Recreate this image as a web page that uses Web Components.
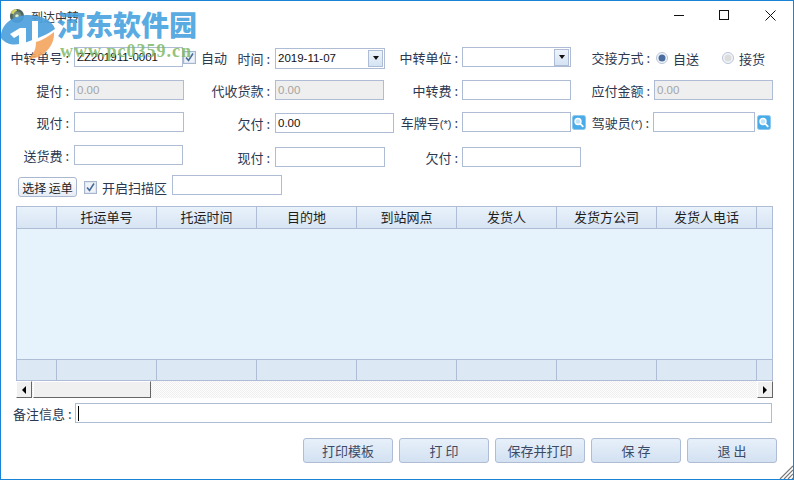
<!DOCTYPE html>
<html lang="zh">
<head>
<meta charset="utf-8">
<title>到达中转</title>
<style>
  html, body { margin: 0; padding: 0; background: #fff; }
  body { font: 13px "Noto Sans CJK SC", "Liberation Sans", sans-serif; color: #2c3850; }
</style>
</head>
<body>
<app-window title-text="到达中转">
  <form-row top="16">
    <form-field label="中转单号 :">
      <text-box width="109" value="ZZ201911-0001"></text-box>
      <check-box checked label="自动"></check-box>
    </form-field>
    <form-field label="时间 :" shift="1"><combo-box width="110" height="21" value="2019-11-07"></combo-box></form-field>
    <form-field label="中转单位 :"><combo-box width="109" height="20"></combo-box></form-field>
    <form-field label="交接方式 :">
      <radio-button checked label="自送" style="margin-left:2px"></radio-button>
      <radio-button label="接货" style="margin-left:23px"></radio-button>
    </form-field>
  </form-row>
  <form-row top="13">
    <form-field label="提付 :"><text-box width="110" value="0.00" disabled></text-box></form-field>
    <form-field label="代收货款 :"><text-box width="109" value="0.00" disabled></text-box></form-field>
    <form-field label="中转费 :"><text-box width="109"></text-box></form-field>
    <form-field label="应付金额 :"><text-box width="119" value="0.00" disabled></text-box></form-field>
  </form-row>
  <form-row top="12">
    <form-field label="现付 :"><text-box width="110"></text-box></form-field>
    <form-field label="欠付 :" shift="1"><text-box width="119" value="0.00"></text-box></form-field>
    <form-field label="车牌号<small>(*)</small> :"><text-box width="109"></text-box><search-button></search-button></form-field>
    <form-field label="驾驶员<small>(*)</small> :" inset="1"><text-box width="102"></text-box><search-button style="margin-left:2px"></search-button></form-field>
  </form-row>
  <form-row top="13">
    <form-field label="送货费 :"><text-box width="109"></text-box></form-field>
    <form-field label="现付 :" shift="2"><text-box width="110"></text-box></form-field>
    <form-field label="欠付 :" shift="2"><text-box width="119"></text-box></form-field>
  </form-row>
  <scan-bar></scan-bar>
  <data-grid columns="托运单号,托运时间,目的地,到站网点,发货人,发货方公司,发货人电话"></data-grid>
  <note-bar></note-bar>
  <action-bar>
    <push-button>打印模板</push-button>
    <push-button>打 印</push-button>
    <push-button>保存并打印</push-button>
    <push-button>保 存</push-button>
    <push-button>退 出</push-button>
  </action-bar>
</app-window>
<site-watermark></site-watermark>

<script>
"use strict";
// every element just sets its markup in an open shadow root
class Base extends HTMLElement {
  connectedCallback() {
    if (this.shadowRoot) return;
    this.attachShadow({ mode: "open" }).innerHTML = this.markup();
  }
  attr(name, fallback = "") {
    return this.hasAttribute(name) ? this.getAttribute(name) : fallback;
  }
}

class AppWindow extends Base {
  markup() {
    return `<style>
      :host { display: block; box-sizing: border-box; width: 794px; height: 480px; border: 1px solid #1a83d6; background: #fff; position: relative; overflow: hidden; }
      .title { display: flex; align-items: center; height: 30px; padding-left: 8px; font-size: 12px; color: #333; }
      .ico { width: 16px; height: 16px; margin-right: 6px; }
      .btns { margin-left: auto; display: flex; }
      .btns svg { width: 46px; height: 30px; display: block; }
      .grip { position: absolute; right: 0; bottom: 0; width: 14px; height: 14px; }
    </style>
    <div class="title">
      <svg class="ico" viewBox="0 0 18 18"><circle cx="9" cy="9" r="8" fill="#4c6660"/><circle cx="9" cy="9" r="5" fill="#6f8a80"/><circle cx="9" cy="9" r="2" fill="#dff0d0"/><path d="M2 6a8 8 0 0 1 6-5l1 2a6 6 0 0 0-4 4z" fill="#d9d65c"/></svg>
      <span>${this.attr("title-text")}</span>
      <div class="btns">
        <svg viewBox="0 0 46 30"><path d="M19 14.500h10" stroke="#111" fill="none"/></svg>
        <svg viewBox="0 0 46 30"><rect x="18.500" y="9.500" width="9" height="9" stroke="#111" fill="none"/></svg>
        <svg viewBox="0 0 46 30"><path d="M18.500 9.500l10 10M28.500 9.500l-10 10" stroke="#111" fill="none"/></svg>
      </div>
    </div>
    <slot></slot>
    <svg class="grip" viewBox="0 0 14 14"><path d="M14 1L1 14M14 5L5 14M14 9L9 14M14 13L13 14" stroke="#777" stroke-width="1.200" fill="none"/></svg>`;
  }
}

class FormRow extends Base {
  markup() {
    return `<style>
      :host { display: grid; grid-template-columns: 186px 209px 192px 1fr; height: 20px; margin-top: ${this.attr("top", 12)}px; white-space: nowrap; }
    </style><slot></slot>`;
  }
}

// columns of the form have different label widths, the track index decides it
class FormField extends Base {
  markup() {
    const index = [...this.parentElement.children].indexOf(this);
    const widths = [73, 88, 66, 66];
    const pads = [5, 5, 4, 4];
    const w = widths[index] - Number(this.attr("inset", 0));
    return `<style>
      :host { display: flex; align-items: center; height: 20px; margin-top: ${this.attr("shift", 0)}px; min-width: 0; }
      label { flex: none; width: ${w}px; box-sizing: border-box; padding-right: ${pads[index]}px; text-align: right; }
      small { font: 11px "Liberation Sans", sans-serif; }
    </style><label>${this.attr("label")}</label><slot></slot>`;
  }
}

class TextBox extends Base {
  markup() {
    const off = this.hasAttribute("disabled");
    return `<style>
      :host { display: inline-block; flex: none; box-sizing: border-box; width: ${this.attr("width", 110)}px; height: 20px; border: 1px solid #aebcd6; background: ${off ? "#efefef" : "#fff"}; color: ${off ? "#a4a4a4" : "#111"}; font: 11.500px/18px "Liberation Sans", sans-serif; padding-left: 2px; overflow: hidden; }
    </style>${this.attr("value")}`;
  }
}

class ComboBox extends Base {
  markup() {
    const h = this.attr("height", 20);
    return `<style>
      :host { display: inline-flex; flex: none; box-sizing: border-box; width: ${this.attr("width", 110)}px; height: ${h}px; border: 1px solid #aebcd6; background: #fff; color: #111; font: 11.500px "Liberation Sans", sans-serif; align-items: center; padding-left: 2px; }
      span { flex: 1; }
      b { box-sizing: border-box; width: 15px; height: 17px; margin-right: 1px; border: 1px solid #aebcd6; background: linear-gradient(#eef4fb, #d5e3f3); display: flex; align-items: center; justify-content: center; }
      i { border: 3px solid transparent; border-top: 4px solid #111; border-bottom: 0; }
    </style><span>${this.attr("value")}</span><b><i></i></b>`;
  }
}

class CheckBox extends Base {
  markup() {
    return `<style>
      :host { display: inline-flex; align-items: center; flex: none; gap: 5px; }
      svg { width: 13px; height: 13px; display: block; }
    </style>
    <svg viewBox="0 0 13 13"><rect x=".5" y=".5" width="12" height="12" fill="#dde6f1" stroke="#a7b5cd"/><rect x="2" y="2" width="9" height="9" fill="#eef3f9"/><path d="M3 6.500l2.500 3L10 2.500" stroke="#4a6a98" stroke-width="1.600" fill="none"/></svg>
    <span>${this.attr("label")}</span>`;
  }
}

class RadioButton extends Base {
  markup() {
    const dot = this.hasAttribute("checked") ? "#4b6c9f" : "#dcdcdc";
    return `<style>
      :host { display: inline-flex; align-items: center; flex: none; gap: 5px; margin-top: 2px; }
      svg { width: 12px; height: 12px; display: block; }
    </style>
    <svg viewBox="0 0 12 12"><circle cx="6" cy="6" r="5.500" fill="#f2f5f9" stroke="#b7c3d6"/><circle cx="6" cy="6" r="3.500" fill="${dot}"/></svg>
    <span>${this.attr("label")}</span>`;
  }
}

class SearchButton extends Base {
  markup() {
    return `<style>
      :host { display: inline-block; flex: none; width: 14px; height: 15px; margin-left: 1px; }
      svg { display: block; }
    </style>
    <svg width="14" height="15" viewBox="0 0 14 15"><rect x=".5" y=".5" width="13" height="14" rx="2" fill="#49ace9" stroke="#8cc8ee"/><circle cx="6" cy="6.500" r="3" fill="#bfe3fa" stroke="#fff" stroke-width="1.400"/><path d="M8.300 8.800l3 3" stroke="#fff" stroke-width="1.800"/></svg>`;
  }
}

class PushButton extends Base {
  markup() {
    return `<style>
      :host { display: flex; align-items: center; justify-content: center; box-sizing: border-box; width: 90px; height: 25px; border: 1px solid #aebcd6; border-radius: 3px; background: linear-gradient(#e7f0fa, #d3e1f1); color: #3b4a66; }
    </style><slot></slot>`;
  }
}

class ScanBar extends Base {
  markup() {
    return `<style>
      :host { display: flex; align-items: flex-end; height: 22px; margin: 10px 0 0 17px; }
      button { box-sizing: border-box; width: 59px; height: 20px; padding: 0; border: 1px solid #a9b7d1; border-radius: 3px; background: linear-gradient(#fff, #e6ecf5); color: #222; font: 12px "Noto Sans CJK SC", sans-serif; }
      check-box { margin-left: 7px; }
      text-box { margin-left: 5px; align-self: flex-start; }
    </style>
    <button>选择 运单</button>
    <check-box checked label="开启扫描区"></check-box>
    <text-box width="110"></text-box>`;
  }
}

class DataGrid extends Base {
  markup() {
    const cols = this.attr("columns").split(",");
    const cells = (names) => `<div class="c first"></div>` + names.map((n) => `<div class="c">${n}</div>`).join("") + `<div class="c last"></div>`;
    return `<style>
      :host { display: block; box-sizing: border-box; width: 757px; margin: 9px 0 0 15px; color: #1d1d1d; }
      .box { border: 1px solid #aebcd6; border-bottom: 0; background: #e6f3fd; }
      .row { display: grid; grid-template-columns: 40px repeat(7, 100px) 1fr; }
      .head { height: 21px; background: linear-gradient(#e9f2fb, #d7e4f3); border-bottom: 1px solid #aebcd6; }
      .body { height: 130px; }
      .foot { height: 20px; background: #dde8f5; border-top: 1px solid #aebcd6; border-bottom: 1px solid #aebcd6; }
      .c { border-right: 1px solid #aebcd6; text-align: center; line-height: 20px; white-space: nowrap; overflow: hidden; }
      .last { border-right: 0; }
    </style>
    <div class="box">
      <div class="row head">${cells(cols)}</div>
      <div class="body"></div>
      <div class="row foot">${cells(cols.map(() => ""))}</div>
    </div>
    <h-scrollbar></h-scrollbar>`;
  }
}

class HScrollbar extends Base {
  markup() {
    const raised = "box-sizing:border-box;background:#f0f0f0;border:1px solid;border-color:#fff #666 #666 #fff;";
    return `<style>
      :host { display: flex; height: 17px; background: repeating-conic-gradient(#efefef 0 25%, #fdfdfd 0 50%) 0 0 / 2px 2px; }
      .arrow { ${raised} width: 16px; display: flex; align-items: center; justify-content: center; }
      .thumb { ${raised} width: 118px; margin-left: 1px; }
      .left { border-top: 4px solid transparent; border-bottom: 4px solid transparent; border-right: 4px solid #000; }
      .right { border-top: 4px solid transparent; border-bottom: 4px solid transparent; border-left: 4px solid #000; }
    </style>
    <div class="arrow"><i class="left"></i></div>
    <div class="thumb"></div>
    <div style="flex:1"></div>
    <div class="arrow"><i class="right"></i></div>`;
  }
}

class NoteBar extends Base {
  markup() {
    return `<style>
      :host { display: flex; align-items: center; height: 20px; margin: 5px 0 0 12px; }
      .input { box-sizing: border-box; width: 697px; height: 20px; margin-left: 3px; border: 1px solid #aebcd6; display: flex; align-items: center; padding-left: 2px; }
      .caret { width: 1px; height: 15px; background: #000; }
    </style>
    <span>备注信息 :</span>
    <div class="input"><div class="caret"></div></div>`;
  }
}

class ActionBar extends Base {
  markup() {
    return `<style>
      :host { display: flex; gap: 6px; margin: 15px 0 0 302px; }
    </style><slot></slot>`;
  }
}

// the download site's stamp, lies over the title bar and first row
class SiteWatermark extends Base {
  markup() {
    return `<style>
      :host { position: absolute; left: 0; top: 0; width: 200px; height: 66px; pointer-events: none; }
      svg { position: absolute; left: 0; top: 10px; }
      .name { position: absolute; left: 57px; top: 6px; font: 900 28px/36px "Noto Sans CJK SC", sans-serif; color: rgba(66, 160, 222, .9); white-space: nowrap; }
      .url { position: absolute; left: 60px; top: 41px; font: bold 18px/20px "Liberation Serif", serif; letter-spacing: 1px; color: rgba(128, 184, 100, .85); white-space: nowrap; }
    </style>
    <svg width="60" height="50" viewBox="0 0 60 50">
      <path d="M1 28C0 14 14 5 28 5c13 0 25 6 27 14-8 6-17 9-28 13C18 35 8 37 1 28z" fill="#4d9fdc" fill-opacity=".92"/>
      <path d="M10 24l10-6h6v17h-7V25l-5 3z" fill="#fff"/>
      <path d="M32 11h6v19h-6z" fill="#fff"/>
      <path d="M54 22c1 14-11 27-26 27 6-5 8-10 8-17 7-2 13-6 18-10z" fill="#f3a65f" fill-opacity=".92"/>
    </svg>
    <div class="name">河东软件园</div>
    <div class="url">www.pc0359.cn</div>`;
  }
}

customElements.define("app-window", AppWindow);
customElements.define("form-row", FormRow);
customElements.define("form-field", FormField);
customElements.define("text-box", TextBox);
customElements.define("combo-box", ComboBox);
customElements.define("check-box", CheckBox);
customElements.define("radio-button", RadioButton);
customElements.define("search-button", SearchButton);
customElements.define("push-button", PushButton);
customElements.define("scan-bar", ScanBar);
customElements.define("data-grid", DataGrid);
customElements.define("h-scrollbar", HScrollbar);
customElements.define("note-bar", NoteBar);
customElements.define("action-bar", ActionBar);
customElements.define("site-watermark", SiteWatermark);
</script>
</body>
</html>
